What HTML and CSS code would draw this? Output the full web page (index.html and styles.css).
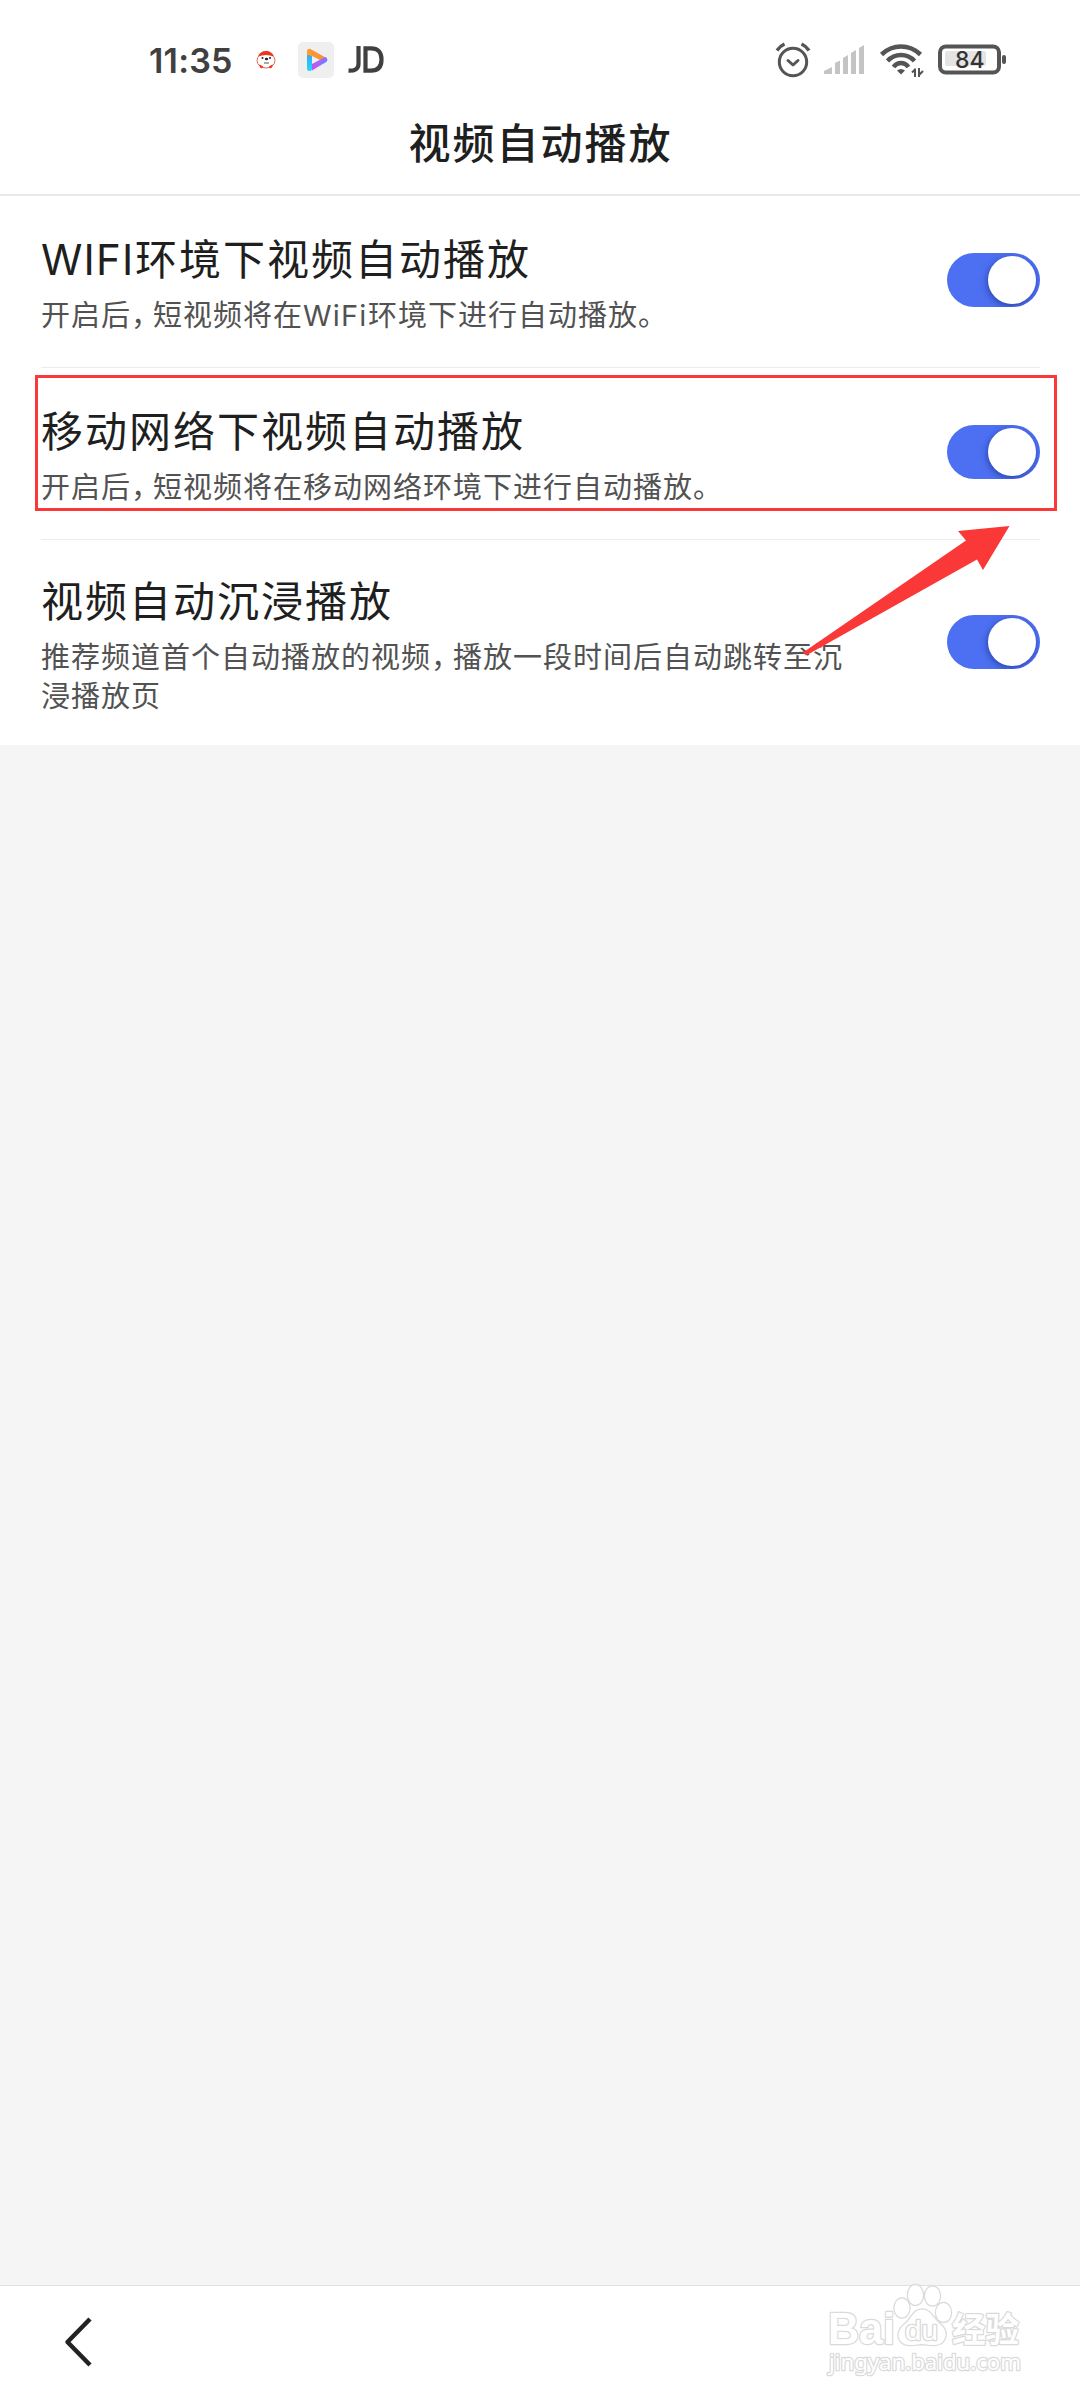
FILE: index.html
```html
<!DOCTYPE html>
<html lang="zh-CN">
<head>
<meta charset="utf-8">
<title>视频自动播放</title>
<link rel="stylesheet" href="styles.css">
</head>
<body>
<div class="screen">
  <div class="status">
    <span class="clock">11:35</span>
    <svg class="santa" width="20" height="20" viewBox="0 0 20 20">
      <ellipse cx="10" cy="10.500" rx="9" ry="7.500" fill="#fff" stroke="#e8684c" stroke-width="1"/>
      <path d="M2 6.500Q4 1 10 1t8 5.500Q10 3.500 2 6.500Z" fill="#ee3524"/>
      <path d="M3.500 15l3.500 2-2 1zM16.500 15l-3.500 2 2 1z" fill="#ee3524" stroke="#ee3524"/>
      <circle cx="6.500" cy="8" r="1" fill="#222"/><circle cx="14" cy="8" r="1" fill="#222"/>
      <ellipse cx="10.500" cy="9" rx="1.700" ry="1.300" fill="#222"/>
      <path d="M8 13h5" stroke="#555"/>
    </svg>
    <svg class="player" width="36" height="36" viewBox="0 0 36 36">
      <defs>
        <linearGradient id="o" x1="0" x2="1"><stop offset="0" stop-color="#ff9d2b"/><stop offset="1" stop-color="#f58a4c"/></linearGradient>
        <linearGradient id="p" x1="0" x2="1"><stop offset="0" stop-color="#c951f2"/><stop offset="1" stop-color="#7b7dff"/></linearGradient>
        <linearGradient id="c" x1="0" x2="0" y1="0" y2="1"><stop offset="0" stop-color="#3d9cf5"/><stop offset="1" stop-color="#1fd9fb"/></linearGradient>
      </defs>
      <rect width="36" height="36" rx="5" fill="#efefef"/>
      <rect x="9" y="8" width="5" height="21" rx="2" fill="url(#c)"/>
      <path d="M14 28.500V22l8.500-4.500L28 15q2.500 3 0 5z" fill="url(#p)"/>
      <path d="M9 10Q9 6 12.500 7l15 8.500q2 1.500 1 3.500L22 18l-8-4-5-1z" fill="url(#o)"/>
      <path d="M22.500 17.500l4.500-2.300q4 2.300 1 4.800l-4 2z" fill="#7d78fb"/>
    </svg>
    <svg class="jd" width="38" height="30" viewBox="0 0 38 30">
      <path d="M10.500 1v18q0 7-10 6.700M17.500 3.300v22.400h5.500q10.500 0 10.500-11.200T23 3.300z" fill="none" stroke="#404040" stroke-width="4.200"/>
    </svg>
    <span class="spring"></span>
    <svg class="signals" width="240" height="44" viewBox="0 0 240 44" fill="none" stroke="#555" stroke-linecap="round" stroke-linejoin="round">
      <circle cx="23" cy="24" r="13.700" stroke-width="3"/>
      <path d="M18 22.500l5 4.500 5-4.500" stroke-width="3"/>
      <path d="M7 12.500q3-4.500 7.500-6.500M39 12.500q-3-4.500-7.500-6.500" stroke-width="3.500" stroke-linecap="butt"/>
      <path d="M54 36v-3l8-4v7zM65 36V25l5-2.500V36zM73 36V20l5-3v19zM81 36V15l5-3v24zM89 36V10l5-3v29z" fill="#c4c4c4" stroke="none"/>
      <path d="M111.500 16.500q8.500-8 19.500-8t19.500 8M117.500 23q5.500-6 13.500-6t13.500 6M123.500 29q3-4 7.500-4t7.500 4" stroke-width="4.500" stroke-linecap="butt"/>
      <path d="M127 32.500q4-3 8 0l-4 4z" fill="#555" stroke="none"/>
      <path d="M142 34.500l3-3V39M145 30.500V38M149 30v9M149 37l4-4" stroke-width="2" stroke-linecap="butt"/>
      <rect x="170" y="8.500" width="59" height="26" rx="6" stroke-width="4"/>
      <rect x="175" y="13" width="41" height="15" rx="2" fill="#e4e4e4" stroke="none"/>
      <path d="M234 19v5" stroke-width="4"/>
      <text x="185" y="29.500" class="level">84</text>
    </svg>
  </div>
  <header class="bar">视频自动播放</header>
  <main class="list">
    <section class="row">
      <div class="copy">
        <h2><span class="latin">WIFI</span>环境下视频自动播放</h2>
        <p>开启后<i>，</i>短视频将在<span class="latin">WiFi</span>环境下进行自动播放。</p>
      </div>
      <span class="toggle"></span>
    </section>
    <section class="row">
      <div class="copy">
        <h2>移动网络下视频自动播放</h2>
        <p>开启后<i>，</i>短视频将在移动网络环境下进行自动播放。</p>
      </div>
      <span class="toggle"></span>
    </section>
    <section class="row tall">
      <div class="copy">
        <h2>视频自动沉浸播放</h2>
        <p>推荐频道首个自动播放的视频<i>，</i>播放一段时间后自动跳转至沉<br>浸播放页</p>
      </div>
      <span class="toggle"></span>
    </section>
  </main>
  <footer class="nav">
    <svg width="30" height="54" viewBox="0 0 30 54"><path d="M26 4L3.500 27 26 50" fill="none" stroke="#222" stroke-width="4.500" stroke-linejoin="round"/></svg>
  </footer>
  <div class="frame"></div>
  <svg class="arrow" width="210" height="134" viewBox="801 524 210 134"><path d="M1009.500 526L958 531l8 9.500L803 652.500l3 3L977 559.500l6 10.500z" fill="#fb3838"/></svg>
  <svg class="mark" width="220" height="110" viewBox="820 2275 220 110">
    <g class="ink">
      <text class="logo" x="828" y="2344" font-size="44" font-weight="700" textLength="67" lengthAdjust="spacingAndGlyphs">Bai</text>
      <ellipse cx="902" cy="2308" rx="7.500" ry="9.500"/>
      <ellipse cx="915.500" cy="2295" rx="7.500" ry="10"/>
      <ellipse cx="932.500" cy="2296" rx="7.500" ry="9.500"/>
      <ellipse cx="943.500" cy="2312.500" rx="7.500" ry="9.500"/>
      <path d="M922 2309.500c-9 0-10 9-17 14.500-6 4.500-8 11-5 16 4 7 13 5 22 4 9 1 18 3 22-4 3-5 2-11-4-16-7-5.500-9-14.500-18-14.500z"/>
      <text class="logo" x="905" y="2340" font-size="27" textLength="33" lengthAdjust="spacingAndGlyphs">du</text>
      <text x="952" y="2342" font-size="34" font-weight="700" textLength="67" lengthAdjust="spacingAndGlyphs">经验</text>
      <text x="829" y="2370" font-size="22" textLength="192" lengthAdjust="spacingAndGlyphs">jingyan.baidu.com</text>
    </g>
  </svg>
</div>
</body>
</html>
```
FILE: styles.css
```css
* { box-sizing: border-box; margin: 0; padding: 0; }
body { background: #f5f5f5; font-family: "Noto Sans CJK SC", sans-serif; color: #1f1f1f; }
.screen { position: relative; width: 1080px; height: 2400px; display: flex; flex-direction: column; overflow: hidden; }
.status { height: 100px; background: #fff; display: flex; align-items: center; padding: 20px 70px 0 149px; }
.clock { width: 107px; padding-top: 2px; font: 600 34px/40px Inter, sans-serif; letter-spacing: .2px; color: #404040; white-space: nowrap; }
.player { margin-left: 22px; }
.jd { margin-left: 14px; }
.spring { flex: 1; }
.level { font: 500 23px Inter, sans-serif; fill: #333; stroke: none; letter-spacing: 0; }
.bar { height: 96px; background: #fff; border-bottom: 2px solid #e9e9e9; text-align: center; font-size: 42px; line-height: 81px; font-weight: 500; letter-spacing: 2px; padding-left: 1px; }
.list { background: #fff; padding: 0 40px 0 41px; }
.row { height: 172px; padding-bottom: 3px; display: flex; align-items: center; justify-content: space-between; border-top: 1px solid #ececec; white-space: nowrap; }
.row:first-child { height: 171px; border-top: 0; }
.row.tall { height: 206px; padding-bottom: 2px; }
h2 { font-size: 42px; font-weight: 400; line-height: 60px; letter-spacing: 2px; margin-bottom: 7px; }
p { font-size: 29px; line-height: 39px; letter-spacing: 1px; color: #525252; }
p i { font-style: normal; letter-spacing: -7px; }
.latin { display: inline-block; line-height: 1; font-family: Inter, sans-serif; letter-spacing: 1.2px; }
h2 .latin { width: 94px; }
p .latin { width: 65px; }
.toggle { width: 93px; height: 54px; border-radius: 27px; background: #4d6ff1; padding: 3px 4px 0 0; display: flex; justify-content: flex-end; overflow: hidden; }
.toggle::before { content: ""; width: 48px; height: 48px; border-radius: 50%; background: #fff; box-shadow: -1px 2px 6px rgba(20, 40, 130, .6); }
.nav { margin-top: auto; height: 115px; background: #fff; border-top: 1px solid #e0e0e0; padding: 29px 0 0 64px; }
.frame { position: absolute; left: 35px; top: 375px; width: 1022px; height: 136px; border: 3px solid #fb3838; }
.arrow { position: absolute; left: 801px; top: 524px; }
.mark { position: absolute; left: 820px; top: 2275px; }
.ink { fill: #fff; stroke: #dadada; stroke-width: 2.5px; stroke-linejoin: round; paint-order: stroke; font-family: "Noto Sans", "Noto Sans CJK SC", sans-serif; }
.logo { font-family: "Liberation Sans", sans-serif; }
```
